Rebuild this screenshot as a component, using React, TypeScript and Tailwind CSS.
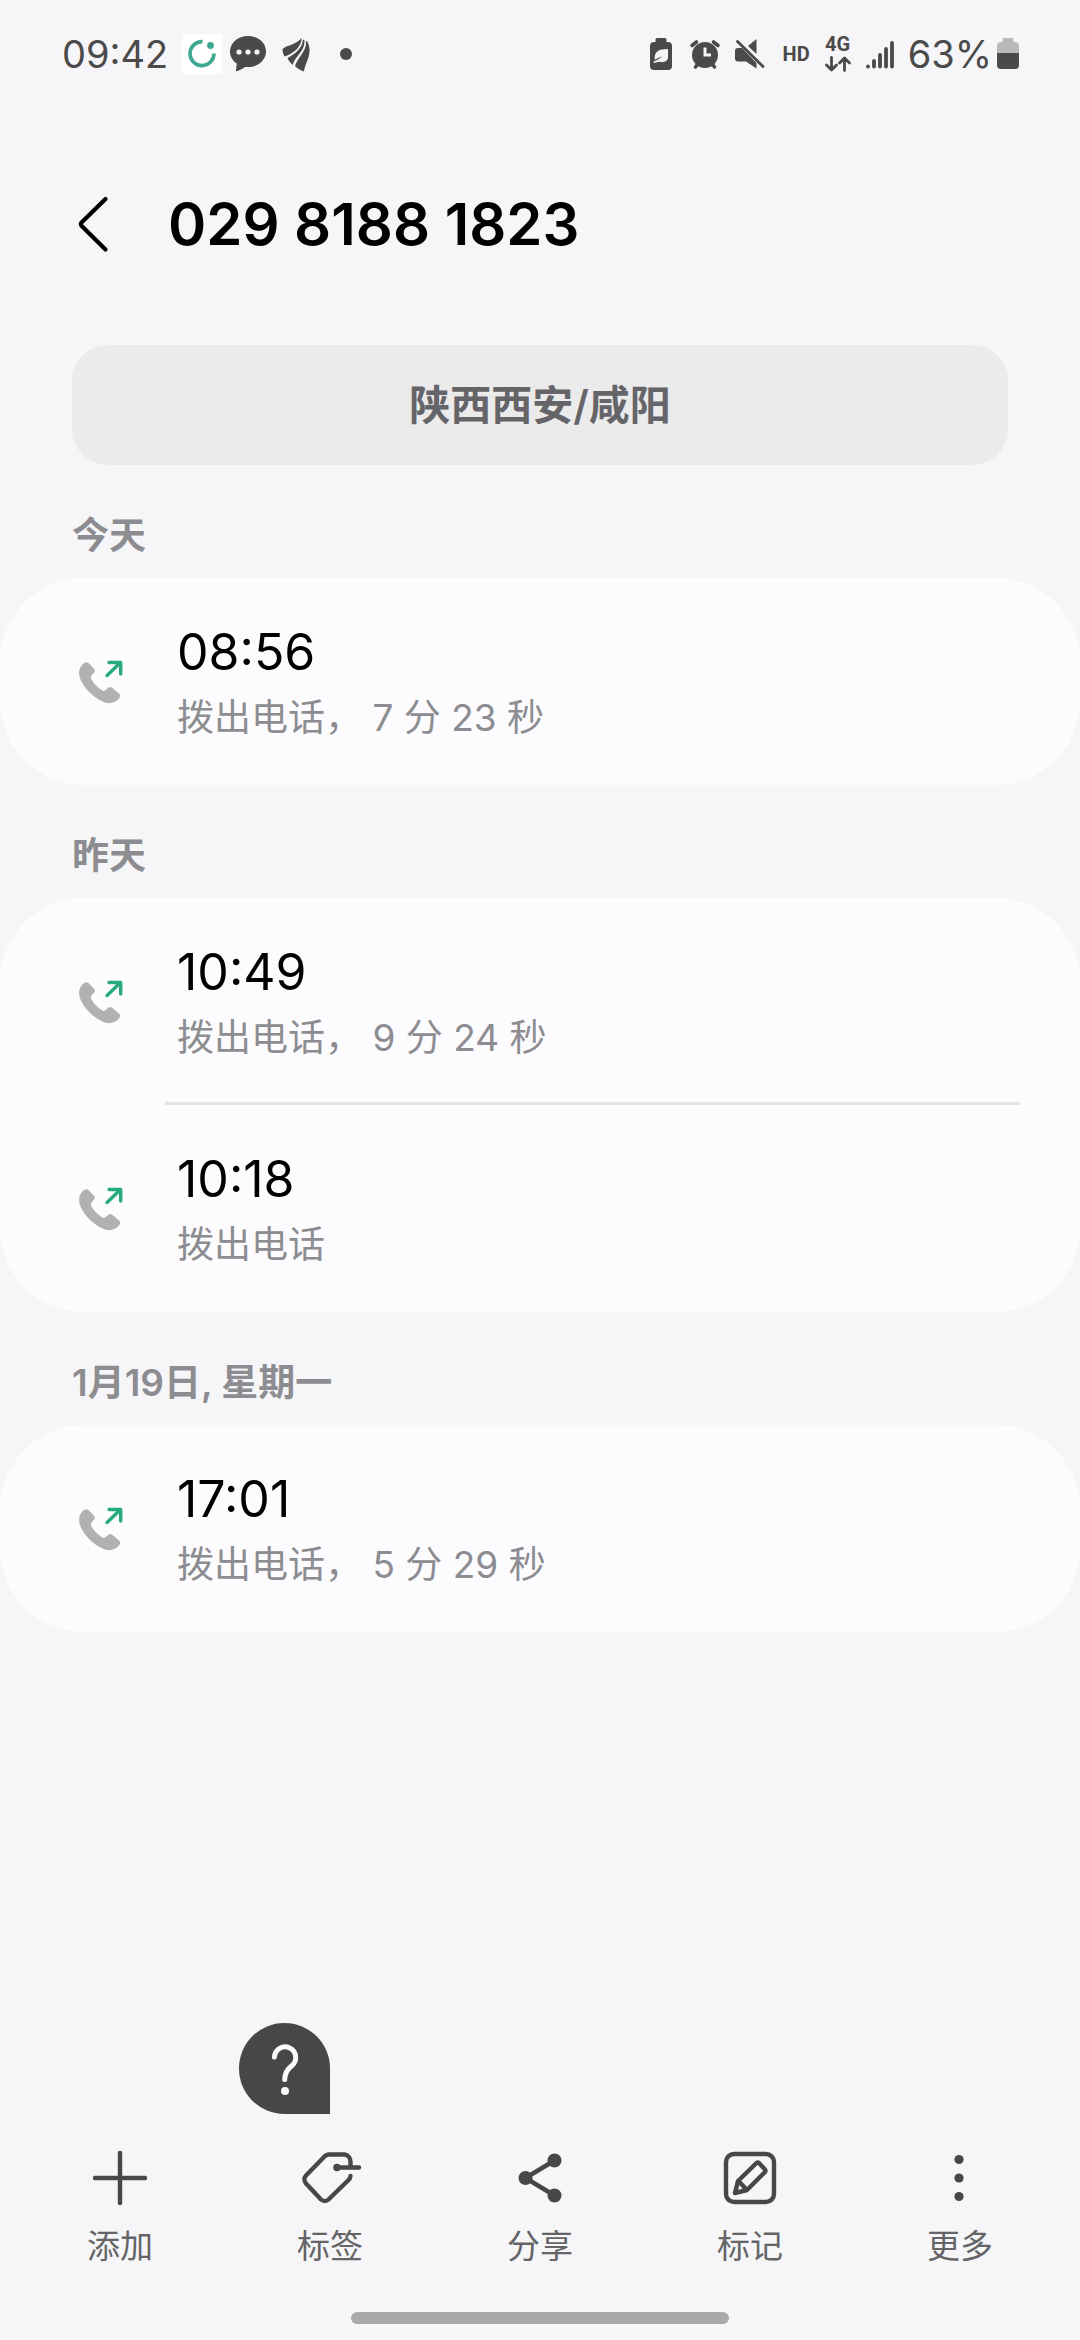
import type { ReactNode } from "react";

interface Call {
  time: string;
  detail: string;
}

interface CallGroup {
  label: string;
  calls: Call[];
}

const groups: CallGroup[] = [
  { label: "今天", calls: [{ time: "08:56", detail: "拨出电话， 7 分 23 秒" }] },
  {
    label: "昨天",
    calls: [
      { time: "10:49", detail: "拨出电话， 9 分 24 秒" },
      { time: "10:18", detail: "拨出电话" },
    ],
  },
  { label: "1月19日, 星期一", calls: [{ time: "17:01", detail: "拨出电话， 5 分 29 秒" }] },
];

function StatusBar() {
  return (
    <header className="flex h-27 items-center justify-between px-15 text-[38px] leading-none text-[#4a4a4a]">
      <div className="flex items-center pl-0.5">
        <span>09:42</span>
        <svg className="ml-[14px] h-10 w-10" viewBox="0 0 40 40">
          <rect width="40" height="40" fill="#fff" />
          <path d="M20.5 7.6A12 12 0 1 0 32 19.5" fill="none" stroke="#3fa890" strokeWidth="3.6" />
          <circle cx="28.5" cy="11.5" r="3.4" fill="#3fa890" />
        </svg>
        <svg className="ml-2 h-9 w-9" viewBox="0 0 36 36" fill="currentColor">
          <path d="M18 0C8 0 0 6.8 0 15.5c0 5 2.6 9.2 6.8 12-.2 2.6-.6 4.7-.9 6.9 0 .6.6 1 1.2.7 3.2-1 5.6-2.6 8-4.2 1 .1 1.9.1 2.9.1 10 0 18-6.8 18-15.5S28 0 18 0Z" />
          <g fill="#f6f6f8">
            <circle cx="9" cy="16" r="2.6" />
            <circle cx="18" cy="16" r="2.6" />
            <circle cx="27" cy="16" r="2.6" />
          </g>
        </svg>
        <svg className="ml-4 h-9 w-7" viewBox="0 0 28 36" fill="currentColor">
          <path d="M.5 13C6 8.500 14 9 19.500 2 20 10 12 17.500 2.500 20.500 1.300 18 .6 16 .5 13Z" />
          <path d="M20.800 4C20.500 12 12.500 18.500 5.500 22c1 2.800 3 5.200 5.500 7C12 21 24 15 22.300 3.500Z" />
          <path d="M23.800 5.500C25.500 14 16 21 13 30c2.300 2.400 5.200 4.400 9 5.500C22.500 28 32 17 25 5Z" />
        </svg>
        <span className="ml-[30px] h-3 w-3 rounded-full bg-current" />
      </div>
      <div className="flex items-center">
        <svg className="h-8 w-6" viewBox="0 0 24 32" fill="currentColor">
          <path d="M8 0h8a1.5 1.5 0 0 1 1.5 1.5V4H19a4 4 0 0 1 4 4v20a4 4 0 0 1-4 4H5a4 4 0 0 1-4-4V8a4 4 0 0 1 4-4h1.5V1.5A1.5 1.5 0 0 1 8 0Z" />
          <path d="M19 11v8c0 4-4 6-8 4.8-2 .2-4 .7-6 1.2l-.7-1.5c3-1 6.5-2.5 9-5.3-3 1.300-5.500 2.500-7.500 3.500C5 14 9 11 19 11Z" fill="#f6f6f8" />
        </svg>
        <svg className="ml-4 h-8 w-8" viewBox="0 0 32 32" fill="currentColor">
          <circle cx="16" cy="17" r="13" />
          <path d="M3 7.5 7.5 4M29 7.5 24.5 4M6.5 29l3-4M25.5 29l-3-4" stroke="currentColor" strokeWidth="3.6" strokeLinecap="round" />
          <path d="M16 9.5V17h6" fill="none" stroke="#f6f6f8" strokeWidth="3" />
        </svg>
        <svg className="ml-3 h-8 w-8" viewBox="0 0 32 32" fill="currentColor">
          <path d="M23.5 1v15L15 8ZM2 13a3 3 0 0 1 3-3h4l14.5 15v5.5L13 23.5H5a3 3 0 0 1-3-3Z" />
          <path d="M4.5 3.5 30 28.5" stroke="currentColor" strokeWidth="2.8" strokeLinecap="round" />
        </svg>
        <span className="ml-[18px] font-['Roboto'] text-xl leading-none font-bold">HD</span>
        <div className="ml-[14px] flex flex-col items-center">
          <span className="font-['Roboto'] text-xl leading-4 font-bold">4G</span>
          <svg className="mt-1 h-4 w-7" viewBox="0 0 28 16" fill="none" stroke="currentColor" strokeWidth="2.8" strokeLinecap="round" strokeLinejoin="round">
            <path d="M7.5 1.5v12M2.5 9l5 5 5-5M20.5 14.5v-12M15.5 7l5-5 5 5" />
          </svg>
        </div>
        <svg className="ml-[14px] h-8 w-7" viewBox="0 0 28 32" fill="none" stroke="currentColor" strokeWidth="3.8" strokeLinecap="round">
          <path d="M2 28.5v.1M8 23v5.5M14 17v11.5M20 11v17.5M26 5v23.5" />
        </svg>
        <span className="ml-[14px]">63%</span>
        <svg className="ml-1 h-8 w-6" viewBox="0 0 24 32">
          <path d="M8 0h8a1.5 1.5 0 0 1 1.5 1.5V4H19a4 4 0 0 1 4 4v7H1V8a4 4 0 0 1 4-4h1.5V1.5A1.5 1.5 0 0 1 8 0Z" fill="#b9b9bb" />
          <path d="M1 15h22v12a4 4 0 0 1-4 4H5a4 4 0 0 1-4-4Z" fill="currentColor" />
        </svg>
      </div>
    </header>
  );
}

function OutgoingCallIcon() {
  return (
    <svg className="h-12 w-12 shrink-0" viewBox="0 0 48 48" aria-hidden="true">
      <path
        d="M8.5 4.8c1.6-.9 3.2-.6 4.5.7l5 5.3c1.3 1.5 1.2 3-.2 4.300l-2 1.900c-1.100 1.200-1.200 2.600-.5 4 2.200 4.300 6.200 8.500 10.700 11.300 1.400.9 2.700.8 3.800-.2l2.300-2.100c1.500-1.300 3-1.300 4.400 0l6.500 5.500c1.300 1.300 1.500 2.700.5 4.200-3.700 5.300-10 6.700-16 4.300C15.500 38.800 5.800 27.500 3.500 18.500 2.200 12.800 4.300 7.300 8.500 4.800Z"
        fill="#b0b1b3"
      />
      <path d="M31 17.5 44.5 4.5M33 4.5h11.7V16" fill="none" stroke="#27ab7a" strokeWidth="3.4" strokeLinecap="round" strokeLinejoin="round" />
    </svg>
  );
}

function CallRow({ time, detail }: Call) {
  return (
    <div className="flex h-[207px] items-center pr-15 pl-[76px]">
      <OutgoingCallIcon />
      <div className="ml-[53px] flex flex-col gap-1 pt-0.5">
        <span className="text-[50px] leading-[66px] text-black">{time}</span>
        <span className="text-[37px] leading-[58px] text-[#8c8c91]">{detail}</span>
      </div>
    </div>
  );
}

function Group({ label, calls }: CallGroup) {
  return (
    <section>
      <h2 className="flex h-[113px] items-end px-18 pb-6 text-[37px] leading-9 font-semibold text-[#8c8c91]">
        {label}
      </h2>
      <ul className="rounded-[84px] bg-[#fcfcfe]">
        {calls.map((call, i) => (
          <li key={call.time}>
            {i > 0 && <hr className="-mt-[3px] mr-15 ml-[165px] border-t-[3px] border-[#e4e4e6]" />}
            <CallRow {...call} />
          </li>
        ))}
      </ul>
    </section>
  );
}

function Action({ label, children, badge }: { label: string; children: ReactNode; badge?: ReactNode }) {
  return (
    <div className="relative flex flex-1 justify-center">
      {badge}
      <button className="flex flex-col items-center gap-2 text-[#474747]">
        <svg className="h-16 w-16" viewBox="0 0 64 64" fill="none" stroke="currentColor" strokeWidth="4.4" strokeLinecap="round" strokeLinejoin="round">
          {children}
        </svg>
        <span className="text-[33px] leading-[56px] text-[#656567]">{label}</span>
      </button>
    </div>
  );
}

function HelpBubble() {
  return (
    <button
      aria-label="帮助"
      className="absolute right-1/2 bottom-full mb-8 flex h-[91px] w-[91px] items-center justify-center rounded-full rounded-br-none bg-[#474749]"
    >
      <svg className="h-14 w-8" viewBox="0 0 32 56" fill="none" stroke="#fcfcfe" strokeWidth="5" strokeLinecap="round">
        <path d="M5.5 16a10.6 10.6 0 1 1 17.5 8.5C18 28.5 15.7 32 15.7 38.5" />
        <circle cx="16" cy="50" r="4" fill="#fcfcfe" stroke="none" />
      </svg>
    </button>
  );
}

export default function App() {
  return (
    <div className="flex min-h-screen flex-col bg-[#f6f6f8] font-['Inter','Noto_Sans_CJK_SC',sans-serif]">
      <StatusBar />

      <div className="mt-[57px] flex items-center gap-[58px] px-[76px]">
        <button aria-label="返回">
          <svg className="h-[60px] w-[34px]" viewBox="0 0 34 60" fill="none" stroke="#000" strokeWidth="4.2" strokeLinecap="round">
            <path d="M29.5 5 5.5 28.5a2.2 2.2 0 0 0 0 3.2L29.5 55.5" />
          </svg>
        </button>
        <h1 className="text-[58px] leading-[118px] font-semibold text-black">029 8188 1823</h1>
      </div>

      <main className="flex-1">
        <div className="mt-[62px] px-18">
          <button className="h-30 w-full rounded-[36px] bg-[#ebebeb] text-[41px] leading-none font-semibold text-[#656569]">
            陕西西安/咸阳
          </button>
        </div>
        {groups.map((group) => (
          <Group key={group.label} {...group} />
        ))}
      </main>

      <nav className="flex px-[15px]">
        <Action label="添加">
          <path d="M32 7v50M7 32h50" />
        </Action>
        <Action label="标签" badge={<HelpBubble />}>
          <g transform="translate(2 0)">
            <path d="M50.5 21v-5.5a7 7 0 0 0-6-7h-16a6 6 0 0 0-3.500 1.500L6 29.500a6 6 0 0 0 0 8L21 53.500a5.500 5.500 0 0 0 7.500 0L48 34.500a7 7 0 0 0 2.500-4.500" />
            <path d="M37 21.5h22" />
            <circle cx="37" cy="21.5" r="3.8" fill="currentColor" stroke="none" />
          </g>
        </Action>
        <Action label="分享">
          <path d="M46.5 14.5 17.5 32l29 17.5" />
          <g fill="currentColor" stroke="none">
            <circle cx="46.5" cy="14.5" r="7" />
            <circle cx="17.5" cy="32" r="7" />
            <circle cx="46.5" cy="49.5" r="7" />
          </g>
        </Action>
        <Action label="标记">
          <rect x="8" y="8" width="48" height="48" rx="8" />
          <path d="m20 35 18.5-18a2 2 0 0 1 2.5 0l6 6.500a2 2 0 0 1 0 2.500L29 44l-12 3ZM20 35l-3 12M20.500 35l8.500 9" />
        </Action>
        <Action label="更多">
          <g fill="currentColor" stroke="none">
            <circle cx="31" cy="13.5" r="4.6" />
            <circle cx="31" cy="32" r="4.6" />
            <circle cx="31" cy="50.5" r="4.6" />
          </g>
        </Action>
      </nav>

      <div className="mx-auto mt-[38px] mb-4 h-3 w-[35%] rounded-full bg-[#a9a9a9]" />
    </div>
  );
}
